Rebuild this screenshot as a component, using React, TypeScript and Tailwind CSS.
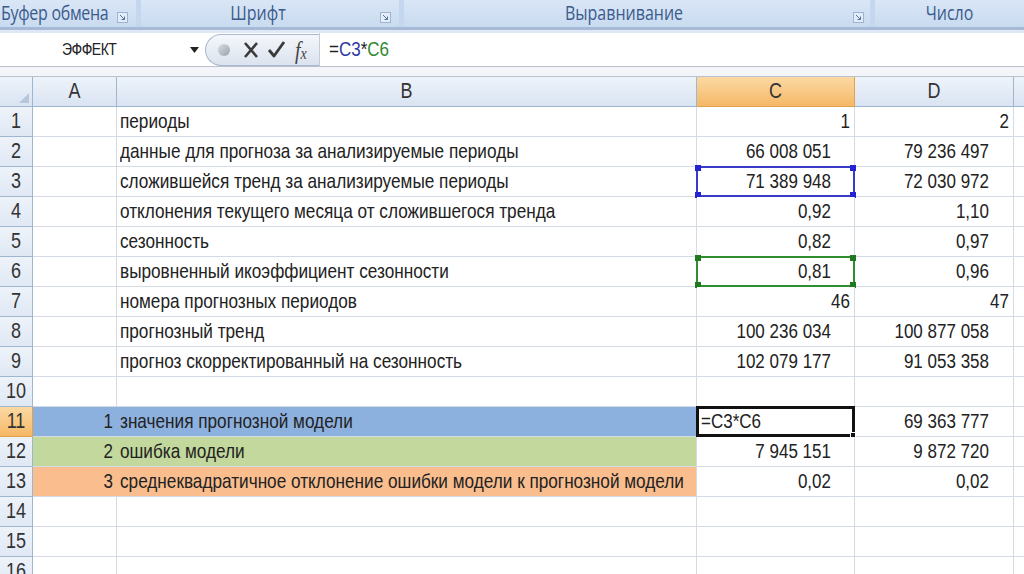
import React from "react";

type Row = {
  n: number;
  a?: string;
  b?: string;
  c?: string;
  d?: string;
  cPlain?: boolean;
  dPlain?: boolean;
  band?: "blue" | "green" | "orange";
};

const rows: Row[] = [
  { n: 1, b: "периоды", c: "1", d: "2", cPlain: true, dPlain: true },
  { n: 2, b: "данные для прогноза за анализируемые периоды", c: "66 008 051", d: "79 236 497" },
  { n: 3, b: "сложившейся тренд за анализируемые периоды", c: "71 389 948", d: "72 030 972" },
  { n: 4, b: "отклонения текущего месяца от сложившегося тренда", c: "0,92", d: "1,10" },
  { n: 5, b: "сезонность", c: "0,82", d: "0,97" },
  { n: 6, b: "выровненный икоэффициент сезонности", c: "0,81", d: "0,96" },
  { n: 7, b: "номера прогнозных периодов", c: "46", d: "47", cPlain: true, dPlain: true },
  { n: 8, b: "прогнозный тренд", c: "100 236 034", d: "100 877 058" },
  { n: 9, b: "прогноз скорректированный на сезонность", c: "102 079 177", d: "91 053 358" },
  { n: 10 },
  { n: 11, a: "1", b: "значения прогнозной модели", d: "69 363 777", band: "blue" },
  { n: 12, a: "2", b: "ошибка модели", c: "7 945 151", d: "9 872 720", band: "green" },
  { n: 13, a: "3", b: "среднеквадратичное отклонение ошибки модели к прогнозной модели", c: "0,02", d: "0,02", band: "orange" },
  { n: 14 },
  { n: 15 },
  { n: 16 },
];

const bandBg: Record<string, string> = {
  blue: "bg-[#8db1df]",
  green: "bg-[#c3d89c]",
  orange: "bg-[#f9bd8e]",
};

function T({ children, className = "" }: { children: React.ReactNode; className?: string }) {
  return <span className={"inline-block scale-y-[1.22] whitespace-nowrap " + className}>{children}</span>;
}

function Launcher() {
  return (
    <span className="inline-flex h-[11px] w-[11px] items-center justify-center border border-[#9fb4cf] bg-[#e3ecf8]">
      <svg width="7" height="7" viewBox="0 0 7 7">
        <path d="M1 1 L5.5 5.5 M5.5 2.5 L5.5 5.5 L2.5 5.5" stroke="#5a7398" strokeWidth="1" fill="none" />
      </svg>
    </span>
  );
}

function Corners({ color }: { color: string }) {
  const cls = "absolute h-[6px] w-[6px] " + color;
  return (
    <>
      <span className={cls + " -left-[3px] -top-[3px]"} />
      <span className={cls + " -right-[3px] -top-[3px]"} />
      <span className={cls + " -left-[3px] -bottom-[3px]"} />
      <span className={cls + " -right-[3px] -bottom-[3px]"} />
    </>
  );
}

export default function App() {
  const font = { fontFamily: '"Liberation Sans", Arial, sans-serif' };
  const rib = { fontFamily: '"Open Sans", sans-serif' };
  return (
    <div className="h-[574px] w-[1024px] overflow-hidden bg-white text-[#222]" style={font}>
      {/* ribbon group labels */}
      <div className="flex h-[27px] gap-[5px] bg-[#c4d7ee]">
        <div className="flex w-[136px] items-start justify-between rounded-b-[4px] bg-gradient-to-b from-[#d9e6f6] to-[#c9dbf0] pl-[1px] pr-[8px] text-[#3b5b8c]" style={rib}>
          <span className="mt-[1px] text-[16px] font-medium tracking-[-0.3px]"><T>Буфер обмена</T></span>
          <span className="mt-[3px]"><Launcher /></span>
        </div>
        <div className="relative flex w-[258px] items-start justify-center rounded-b-[4px] bg-gradient-to-b from-[#d9e6f6] to-[#c9dbf0] pr-[24px] text-[#3b5b8c]" style={rib}>
          <span className="mt-[1px] text-[16px] font-medium"><T>Шрифт</T></span>
          <span className="absolute right-[8px] top-[3px]"><Launcher /></span>
        </div>
        <div className="relative flex w-[466px] items-start justify-center rounded-b-[4px] bg-gradient-to-b from-[#d9e6f6] to-[#c9dbf0] pr-[26px] text-[#3b5b8c]" style={rib}>
          <span className="mt-[1px] text-[16px] font-medium"><T>Выравнивание</T></span>
          <span className="absolute right-[6px] top-[3px]"><Launcher /></span>
        </div>
        <div className="flex flex-1 items-start justify-center rounded-b-[4px] bg-gradient-to-b from-[#d9e6f6] to-[#c9dbf0] text-[#3b5b8c]" style={rib}>
          <span className="mt-[1px] text-[16px] font-medium"><T>Число</T></span>
        </div>
      </div>
      <div className="h-[3px] bg-[#a6bad6]" />
      <div className="h-[3px] bg-[#dfe8f4]" />

      {/* formula bar */}
      <div className="flex h-[33px] items-center bg-white">
        <div className="flex h-full w-[205px] items-center">
          <span className="ml-[62px] text-[14px] tracking-[-0.5px]"><T>ЭФФЕКТ</T></span>
          <svg className="ml-auto mr-[6px]" width="9" height="6" viewBox="0 0 9 6">
            <path d="M0 0 H9 L4.5 6 Z" fill="#222" />
          </svg>
        </div>
        <div className="relative flex h-[32px] w-[114px] items-center rounded-l-[16px] border-b border-l border-t border-[#a9b8cc] bg-gradient-to-b from-[#f4f7fb] to-[#dbe3ee]">
          <span className="ml-[12px] h-[12px] w-[12px] rounded-full bg-gradient-to-br from-[#d8dde4] to-[#9aa3ae]" />
          <svg className="ml-[13px]" width="16" height="18" viewBox="0 0 16 18">
            <path d="M2 2 L14 16 M14 2 L2 16" stroke="#3a3a3a" strokeWidth="2.6" fill="none" />
          </svg>
          <svg className="ml-[8px]" width="19" height="19" viewBox="0 0 19 19">
            <path d="M2 10 L7 16 L17 2" stroke="#3a3a3a" strokeWidth="2.8" fill="none" strokeLinejoin="round" />
          </svg>
          <span className="ml-[9px] text-[20px] italic text-[#444]" style={{ fontFamily: '"Liberation Serif", serif' }}>
            <T>f<span className="text-[14px]">x</span></T>
          </span>
        </div>
        <div className="h-full w-px bg-[#c3ccd8]" />
        <div className="ml-[9px] text-[17px]">
          <T>
            =<span className="text-[#2f3aa5]">C3</span>*<span className="text-[#2f8a2f]">C6</span>
          </T>
        </div>
      </div>
      <div className="h-[1px] bg-[#b9c3cf]" />
      <div className="h-[9px] bg-[#f3f5f8]" />
      <div className="h-[1px] bg-[#b9c3cf]" />

      {/* sheet */}
      <div className="grid grid-cols-[33px_84px_580px_158px_159px_1fr] text-[17px]">
        {/* header */}
        <div className="relative h-[30px] border-b border-r border-[#9eb6ce] bg-gradient-to-b from-[#eef3fa] to-[#d9e4f2]">
          <svg className="absolute bottom-[3px] right-[3px]" width="10" height="10" viewBox="0 0 10 10">
            <path d="M10 0 L10 10 L0 10 Z" fill="#b7c6d9" />
          </svg>
        </div>
        {["A", "B"].map((l) => (
          <div key={l} className="flex h-[30px] items-center justify-center border-b border-r border-[#9eb6ce] bg-gradient-to-b from-[#eef3fa] to-[#d9e4f2] text-[18px] text-[#333]">
            <T>{l}</T>
          </div>
        ))}
        <div className="flex h-[30px] items-center justify-center border-b border-r border-[#e0a24a] bg-gradient-to-b from-[#fbd9a2] to-[#f5b866] text-[18px] text-[#333]">
          <T>C</T>
        </div>
        <div className="flex h-[30px] items-center justify-center border-b border-r border-[#9eb6ce] bg-gradient-to-b from-[#eef3fa] to-[#d9e4f2] text-[18px] text-[#333]">
          <T>D</T>
        </div>
        <div className="h-[30px] border-b border-[#9eb6ce] bg-gradient-to-b from-[#eef3fa] to-[#d9e4f2]" />

        {rows.map((r) => {
          const sel = r.n === 11;
          const band = r.band ? bandBg[r.band] : "bg-white";
          return (
            <React.Fragment key={r.n}>
              <div
                className={
                  "flex h-[30px] items-center justify-center border-b border-r text-[18px] text-[#333] " +
                  (sel
                    ? "border-[#e0a24a] bg-gradient-to-b from-[#fbd9a2] to-[#f5b866]"
                    : "border-[#9eb6ce] bg-gradient-to-b from-[#eef3fa] to-[#dfe8f4]")
                }
              >
                <T>{r.n}</T>
              </div>
              <div className={"flex h-[30px] items-center justify-end border-b border-[#d4dbe5] pr-[4px] " + band + (r.band ? " border-r-0" : " border-r")}>
                {r.a && <T>{r.a}</T>}
              </div>
              <div className={"flex h-[30px] items-center border-b border-r border-[#d4dbe5] pl-[3px] text-[17.2px] " + band}>
                {r.b && <T>{r.b}</T>}
              </div>
              <div
                className={
                  "relative flex h-[30px] items-center border-b border-r border-[#d4dbe5] bg-white " +
                  (r.cPlain ? "justify-end pr-[4px]" : "justify-end pr-[23px]")
                }
              >
                {r.c && <T>{r.c}</T>}
                {r.n === 3 && (
                  <div className="absolute -left-px -top-px bottom-[-1px] right-[-1px] border-2 border-[#3a3ac8]">
                    <Corners color="bg-[#2323d0]" />
                  </div>
                )}
                {r.n === 6 && (
                  <div className="absolute -left-px -top-px bottom-[-1px] right-[-1px] border-2 border-[#2f8f2f]">
                    <Corners color="bg-[#1f7a1f]" />
                  </div>
                )}
                {sel && (
                  <div className="absolute -left-px -top-px bottom-[-1px] right-[-1px] flex items-center border-[3px] border-[#111] pl-[2px]">
                    <T>=C3*C6</T>
                    <span className="absolute -bottom-[4px] -right-[4px] h-[6px] w-[6px] border border-white bg-[#111]" />
                  </div>
                )}
              </div>
              <div
                className={
                  "flex h-[30px] items-center border-b border-r border-[#d4dbe5] bg-white " +
                  (r.dPlain ? "justify-end pr-[4px]" : "justify-end pr-[24px]")
                }
              >
                {r.d && <T>{r.d}</T>}
              </div>
              <div className="h-[30px] border-b border-[#d4dbe5] bg-white" />
            </React.Fragment>
          );
        })}
      </div>
    </div>
  );
}
